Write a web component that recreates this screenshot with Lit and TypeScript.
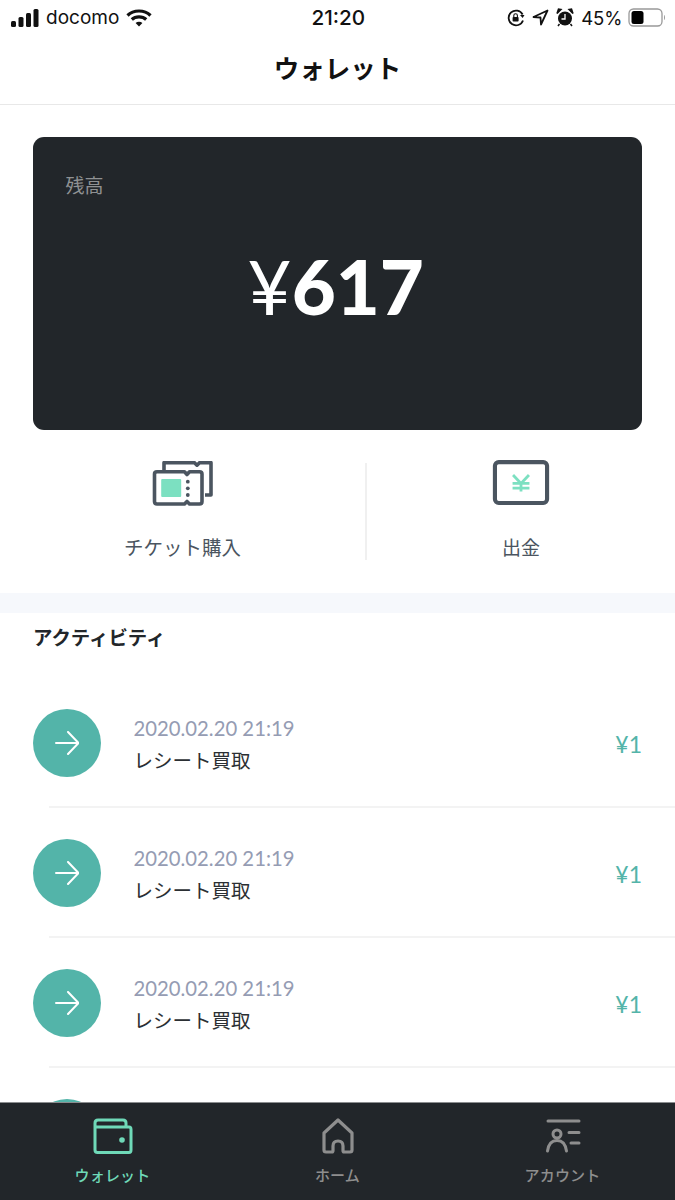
import { LitElement, html, css } from "lit";
import { customElement } from "lit/decorators.js";

const arrow = html`<svg class="arrow" viewBox="0 0 24 24" width="24" height="24" fill="none" stroke="#fff" stroke-width="2" stroke-linecap="round" stroke-linejoin="round"><path d="M1 12H23M13 1L23.5 12L13 23"/></svg>`;

@customElement("app-root")
export class AppRoot extends LitElement {
  static styles = css`
    :host { display: flex; flex-direction: column; width: 675px; height: 1200px; overflow: hidden; background: #fff;
      font-family: Lato, "Noto Sans CJK JP", sans-serif; color: #22262a; }
    .status { height: 35px; flex: none; display: grid; grid-template-columns: 1fr auto 1fr; align-items: center; font-family: Inter, "Liberation Sans", sans-serif; font-size: 19px; color: #111; padding: 0 9.5px 0 11px; }
    .status-left, .status-right { display: flex; align-items: center; }
    .status-left { gap: 7px; }
    .status-right { justify-content: flex-end; gap: 7px; }
    .time { font-weight: 500; font-size: 20.7px; }
    .pct { font-size: 18.5px; margin-right: -2px; }
    .title { flex: none; display: flex; align-items: center; justify-content: center; font-size: 25.5px; font-weight: 700; color: #111; border-bottom: 1px solid #e8e8e8; padding-bottom: 6px; height: 63px; }
    .scroll { flex: 1; min-height: 0; overflow: hidden; }
    .card { margin: 32px 33px 0 32.5px; height: 293px; border-radius: 11px; background: #22262a; position: relative; display: flex; align-items: center; justify-content: center; }
    .card-label { position: absolute; left: 33px; top: 37px; font-size: 19px; line-height: 24px; color: #8f9193; }
    .amount { color: #fff; font-size: 76px; line-height: 1; font-weight: 900; display: flex; align-items: baseline; margin: 4px 3px 0 0; }
    .amount .yen { font-weight: 400; }
    .actions { height: 163px; display: grid; grid-template-columns: 367px 1fr; box-sizing: border-box; padding-top: 33px; }
    .action { display: flex; flex-direction: column; align-items: center; height: 97px; color: #4b5560; }
    .action:first-child { border-right: 2px solid #f0f0f0; box-sizing: content-box; width: 365px; }
    .action svg { display: block; }
    .action span { line-height: 24px; }
    .a1 svg { margin-top: -2px; }
    .a1 span { margin-top: 27px; font-size: 19.5px; }
    .a2 svg { margin-top: -3.5px; }
    .a2 span { margin-top: 31.5px; font-size: 19px; }
    .band { height: 20px; background: #f6f8fc; }
    .heading { font-size: 19.4px; font-weight: 700; line-height: 24px; padding: 13px 33px 0; color: #22262a; height: 37px; box-sizing: content-box; margin-bottom: 15px; }
    .row { height: 130px; box-sizing: border-box; display: flex; position: relative; padding: 0 33px 0 32.5px; align-items: flex-start; }
    .row::after { content: ""; position: absolute; left: 49px; right: 0; bottom: 0; height: 2px; background: #f3f3f3; }
    .circle { width: 68px; height: 68px; border-radius: 50%; background: #53b4a9; display: flex; align-items: center; justify-content: center; flex: none; margin-top: 31px; }
    .arrow { display: block; }
    .info { margin-left: 33px; flex: 1; padding-top: 36px; }
    .date { font-size: 20.3px; line-height: 28px; color: #959cb3; }
    .name { font-size: 19.5px; line-height: 28px; margin-top: 5px; color: #2b2f33; }
    .price { color: #53b4a9; font-size: 23px; margin-top: 52px; line-height: 28px; }
    .tabs { height: 98px; flex: none; background: #22262a; border-top: 1px solid #8b8d8f; box-sizing: border-box; display: grid; grid-template-columns: 225px 225px 225px; }
    .tab { display: flex; flex-direction: column; align-items: center; font-size: 15px; font-weight: 500; color: #8e8e8e; padding-top: 15px; }
    .tab.on { color: #6fd9b8; }
    .tab svg { display: block; }
    .tab span { margin-top: 10px; line-height: 22px; letter-spacing: 0.2px; }
  `;

  row() {
    return html`<div class="row">
      <div class="circle">${arrow}</div>
      <div class="info"><div class="date">2020.02.20 21:19</div><div class="name">レシート買取</div></div>
      <div class="price">¥1</div>
    </div>`;
  }

  render() {
    return html`
      <div class="status">
        <div class="status-left">
          <svg width="28" height="18" viewBox="0 0 28 18" fill="#111"><rect x="0" y="12" width="5" height="6" rx="1.5"/><rect x="7.5" y="8" width="5" height="10" rx="1.5"/><rect x="15" y="4" width="5" height="14" rx="1.5"/><rect x="22.5" y="0" width="5" height="18" rx="1.5"/></svg>
          <span>docomo</span>
          <svg width="26" height="19" viewBox="0 0 26 19" fill="none" stroke="#111" stroke-width="3.2"><path d="M1.5 7.5C7.5 1.5 18.5 1.5 24.5 7.5"/><path d="M5.8 11.5C9.5 8 16.5 8 20.2 11.5"/><path d="M13 18.5L9.6 15C11.5 13.4 14.5 13.4 16.4 15Z" fill="#111" stroke="none"/></svg>
        </div>
        <div class="time">21:20</div>
        <div class="status-right">
          <svg width="18" height="18" viewBox="0 0 18 18" fill="none" stroke="#111" stroke-width="1.8"><path d="M16 11.5A7.4 7.4 0 1 1 15.6 5.5"/><path d="M13 6H17.5L15.6 9Z" fill="#111" stroke="none"/><rect x="5.6" y="8" width="6" height="4.6" rx="0.8" fill="#111" stroke="none"/><path d="M6.8 8V6.6A1.8 1.8 0 0 1 10.4 6.6V8" stroke-width="1.1"/></svg>
          <svg width="17" height="17" viewBox="0 0 17 17" fill="none" stroke="#111" stroke-width="1.8" stroke-linejoin="round"><path d="M15.5 1.5L1.5 8L8.5 8.5L9 15.5Z"/></svg>
          <svg width="18" height="19" viewBox="0 0 18 19" fill="#111"><circle cx="9" cy="10.5" r="7"/><path d="M1 5.5L5 1.5L2.5 1ZM17 5.5L13 1.5L15.5 1Z" stroke="#111" stroke-width="1.5"/><path d="M3.5 16L2 18M14.5 16L16 18" stroke="#111" stroke-width="1.5"/><path d="M9 6V11H5.5" fill="none" stroke="#fff" stroke-width="1.3"/></svg>
          <span class="pct">45%</span>
          <svg width="38" height="19" viewBox="0 0 38 19"><rect x="1" y="1" width="33" height="17" rx="4.5" fill="none" stroke="#999" stroke-width="1.3"/><rect x="3.5" y="3" width="12" height="13" rx="2.5" fill="#000"/><path d="M36 7C37.3 7.6 37.3 11.4 36 12Z" fill="#999"/></svg>
        </div>
      </div>
      <div class="title">ウォレット</div>
      <div class="scroll">
        <div class="card">
          <div class="card-label">残高</div>
          <div class="amount"><span class="yen">¥</span><span>617</span></div>
        </div>
        <div class="actions">
          <div class="action a1">
            <svg width="62" height="48" viewBox="0 0 62 48" fill="none" stroke="#4b5560" stroke-width="3.6" stroke-linejoin="round">
              <path d="M12 9V1.7H42.5L45 4.2L47.5 1.7H59V34H53"/>
              <path d="M2.5 13Q2.5 10.7 5 10.7H32.5L35 13.5L37.5 10.7H47.5Q50 10.7 50 13V40.5Q50 43 47.5 43H37.5L35 40.5L32.5 43H5Q2.5 43 2.5 40.5Z" fill="#fff"/>
              <rect x="9.2" y="18" width="20" height="18" rx="1" fill="#7ce0c1" stroke="none"/>
              <circle cx="35.8" cy="20.7" r="1.9" fill="#4b5560" stroke="none"/><circle cx="35.8" cy="27.3" r="1.9" fill="#4b5560" stroke="none"/><circle cx="35.8" cy="34" r="1.9" fill="#4b5560" stroke="none"/>
            </svg>
            <span>チケット購入</span>
          </div>
          <div class="action a2">
            <svg width="60" height="48" viewBox="0 0 60 48" fill="none"><rect x="2.2" y="2.2" width="55.6" height="43.6" rx="4" stroke="#4b5560" stroke-width="4.4"/><path d="M21.5 16L30 25L38.5 16M30 25V33.5M21 25H39M21 30H39" stroke="#7ce0c1" stroke-width="3"/></svg>
            <span>出金</span>
          </div>
        </div>
        <div class="band"></div>
        <div class="heading">アクティビティ</div>
        ${this.row()}${this.row()}${this.row()}
        <div class="row"><div class="circle">${arrow}</div></div>
      </div>
      <div class="tabs">
        <div class="tab on">
          <svg width="40" height="36" viewBox="0 0 40 36" fill="none" stroke="#6fd9b8" stroke-width="3" stroke-linejoin="round"><path d="M2 7V32Q2 34.5 4.5 34.5H36Q38 34.5 38 32V11.5Q38 9 36 9H4Q2 9 2 7ZM2 7V5Q2 2 5 2H30Q33 2 33 5V9"/><circle cx="29" cy="22" r="2.8" fill="#6fd9b8" stroke="none"/></svg>
          <span>ウォレット</span>
        </div>
        <div class="tab">
          <svg width="32" height="36" viewBox="0 0 32 36" fill="none" stroke="#8e8e8e" stroke-width="3.2" stroke-linejoin="round"><path d="M16 2L2 15V32Q2 34 4 34H10Q11 34 11 32.5V28Q11 23 16 23Q21 23 21 28V32.5Q21 34 22 34H28Q30 34 30 32V15Z"/></svg>
          <span>ホーム</span>
        </div>
        <div class="tab">
          <svg width="36" height="36" viewBox="0 0 36 36" fill="none" stroke="#8e8e8e" stroke-width="3" stroke-linecap="round"><path d="M3 3H34"/><circle cx="12" cy="16" r="4"/><path d="M2.5 33C3.5 26 7 22.5 12 22.5C17 22.5 20.5 26 21.5 33"/><path d="M24 14.5H34M26 25H34"/></svg>
          <span>アカウント</span>
        </div>
      </div>
    `;
  }
}
